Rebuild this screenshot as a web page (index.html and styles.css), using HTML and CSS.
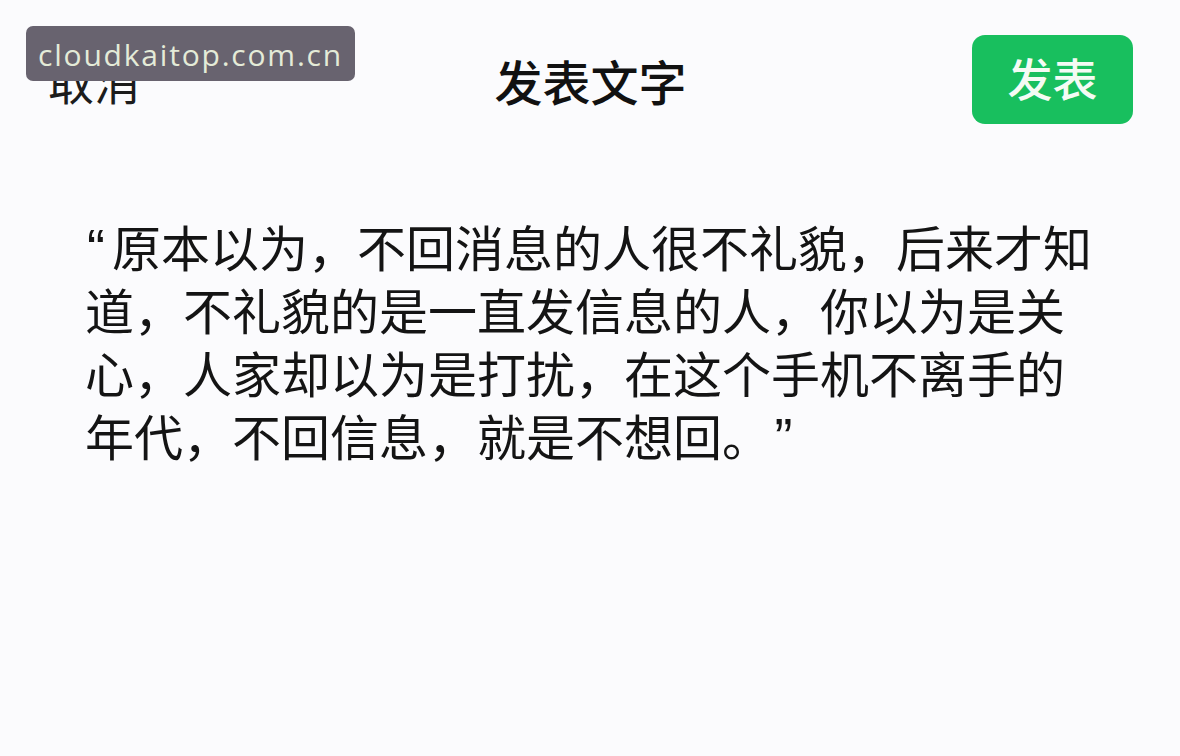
FILE: index.html
```html
<!DOCTYPE html>
<html lang="zh-CN">
<head>
<meta charset="utf-8">
<title>发表文字</title>
<link rel="stylesheet" href="styles.css">
</head>
<body>
<div class="page">
  <header class="topbar">
    <span class="cancel">取消</span>
    <span class="title">发表文字</span>
    <span class="publish-wrap"><button class="publish">发表</button></span>
  </header>
  <main class="content">
    <p class="post"><span class="q-open">“</span>原本以为，不回消息的人很不礼貌，后来才知道，不礼貌的是一直发信息的人，你以为是关心，人家却以为是打扰，在这个手机不离手的年代，不回信息，就是不想回。<span class="q-close">”</span></p>
  </main>
  <div class="watermark">cloudkaitop.com.cn</div>
</div>
</body>
</html>
```

FILE: styles.css
```css
html, body {
  margin: 0;
  padding: 0;
  background: #fbfbfd;
}
.page {
  position: relative;
  width: 1180px;
  height: 756px;
  overflow: hidden;
  font-family: "Noto Sans CJK SC", "Noto Sans", sans-serif;
  color: #161616;
}
.topbar {
  display: grid;
  grid-template-columns: 1fr auto 1fr;
  align-items: center;
  height: 89px;
  padding: 35px 47px 0 48px;
}
.cancel {
  font-size: 46px;
  line-height: 1;
  color: #1c1c1c;
}
.title {
  font-size: 48px;
  font-weight: 500;
  line-height: 1;
  color: #111;
}
.publish-wrap {
  display: flex;
  justify-content: flex-end;
}
.publish {
  width: 161px;
  height: 89px;
  border: none;
  border-radius: 13px;
  background: #18bf5e;
  color: #f4fbf4;
  font-family: "Noto Sans CJK SC", sans-serif;
  font-size: 45px;
  font-weight: 500;
  line-height: 1;
  padding: 0 0 4px 0;
}
.content {
  padding: 93px 0 0 85px;
}
.post {
  margin: 0;
  width: 1015px;
  font-family: "Noto Sans", "Noto Sans CJK SC", sans-serif;
  font-size: 49px;
  line-height: 63px;
  color: #141414;
}
.q-open,
.q-close {
  font-family: "Liberation Sans", sans-serif;
  font-size: 54px;
  line-height: 0;
}
.q-open {
  margin-left: 2px;
  margin-right: 7px;
}
.q-close {
  margin-left: 28px;
}
.watermark {
  position: absolute;
  left: 26px;
  top: 26px;
  width: 329px;
  height: 55px;
  box-sizing: border-box;
  padding-top: 3px;
  border-radius: 7px;
  background: #68636f;
  color: #e4ebd8;
  font-family: "Open Sans", sans-serif;
  font-size: 30px;
  letter-spacing: 1.8px;
  line-height: 52px;
  text-align: center;
}
```
